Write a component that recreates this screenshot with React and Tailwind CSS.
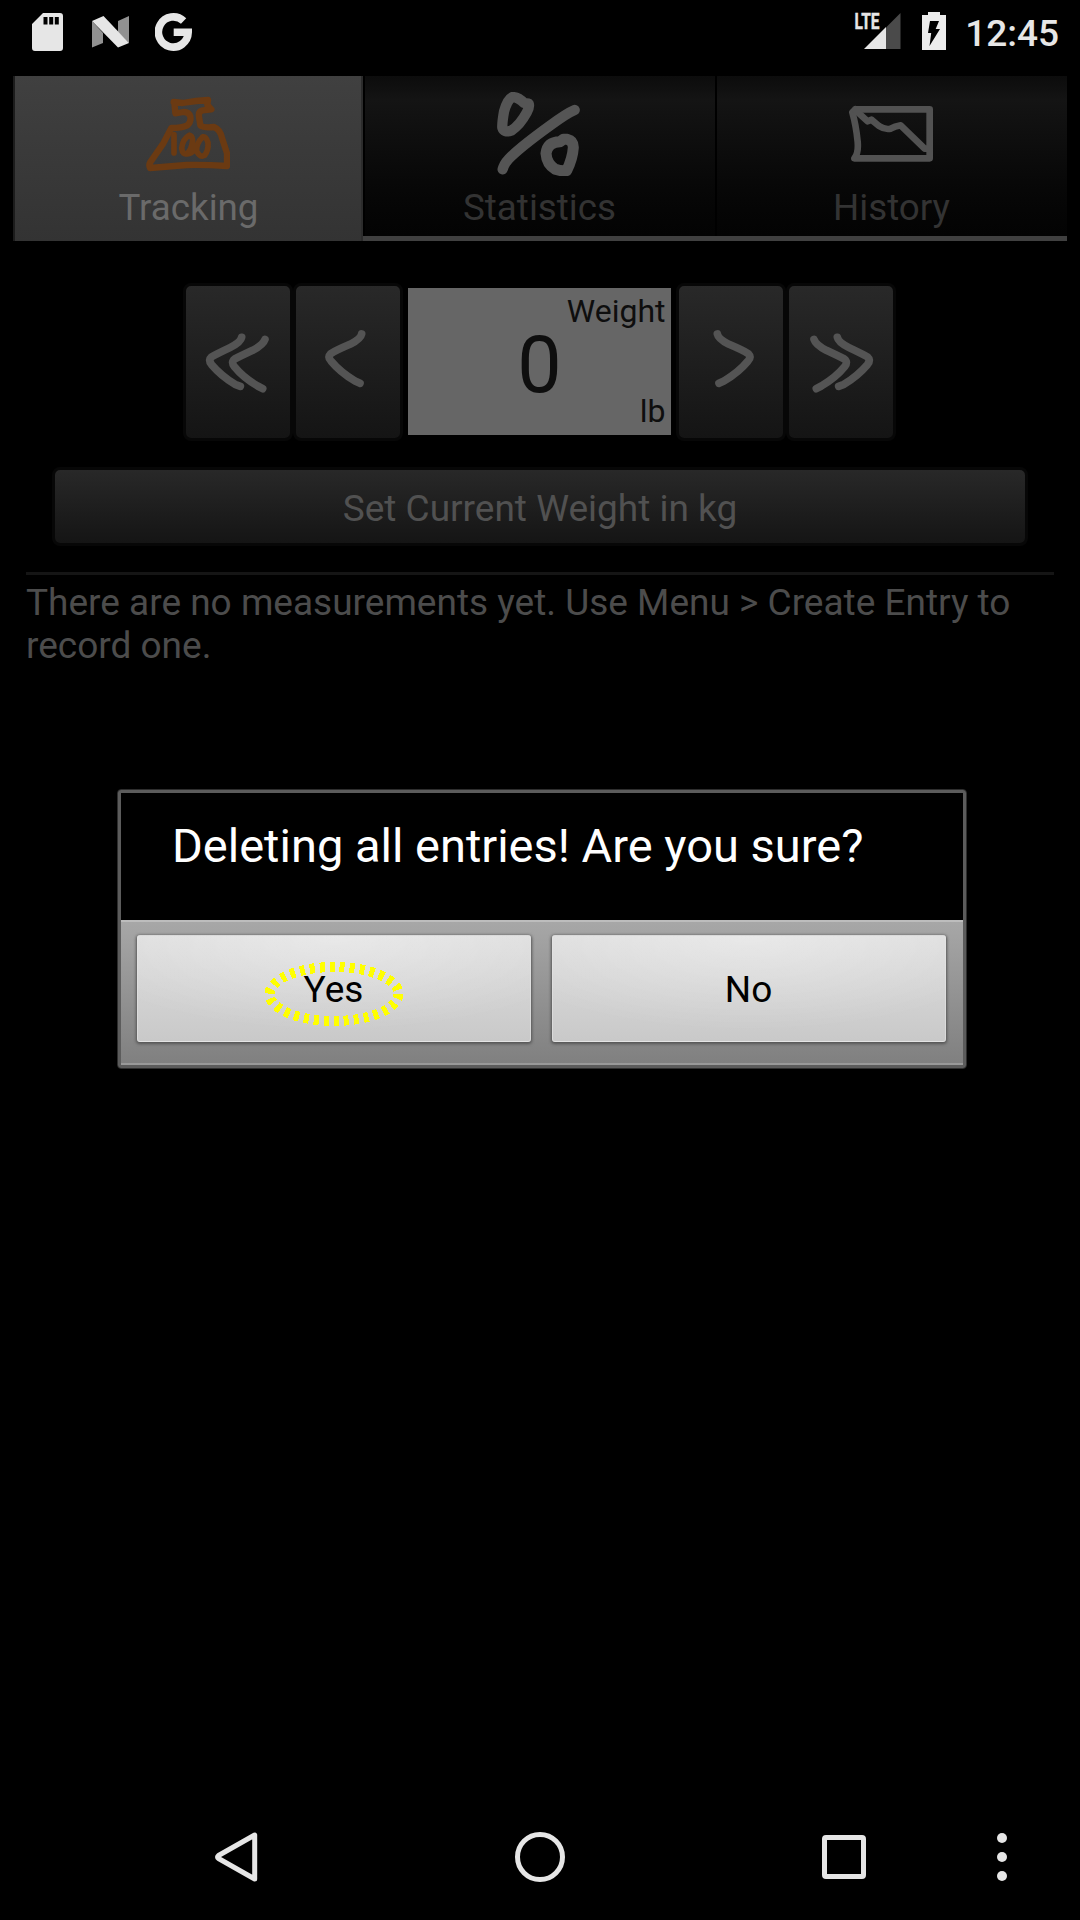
const TABS = [
  { label: "Tracking", icon: <ScaleIcon />, active: true },
  { label: "Statistics", icon: <PercentIcon /> },
  { label: "History", icon: <ChartIcon /> },
];

function ScaleIcon() {
  return (
    <svg className="size-[84px]" viewBox="438 276 252 252" fill="none" stroke="#6b3a12" strokeLinecap="round" strokeLinejoin="round">
      <path strokeWidth="19" d="M521 306 L548 309 Q590 302 624 300 L622 315 L634 328 L608 331 Q594 334 597 350 L601 376 Q610 384 642 381 Q660 388 666 414 L681 460 L681 498 Q620 494 560 495 L450 504 Q446 495 450 488 L490 430 L514 384 Q546 384 562 376 Q574 366 571 350 Q567 335 550 336 L526 340 L523 308" />
      <path strokeWidth="17" d="M522 404 L522 459 M568 406 Q548 417 545 445 Q548 466 562 460 Q574 450 578 422 Q577 407 568 406 M608 411 Q588 430 590 454 Q600 474 614 466 Q626 450 624 428 Q618 408 608 411 M562 462 Q575 462 590 442" />
    </svg>
  );
}

function PercentIcon() {
  return (
    <svg className="size-[84px]" viewBox="441 96 252 252" fill="none" stroke="#555" strokeLinecap="round" strokeLinejoin="round">
      <path strokeWidth="31" d="M488 111 Q472 118 462 155 Q456 190 457 203 Q462 219 484 212 Q510 195 530 158 Q540 140 536 131 L522 129 Q506 112 488 111 Z" />
      <path strokeWidth="31" d="M674 150 Q650 160 600 197 Q510 262 476 297 Q462 312 458 328" />
      <path strokeWidth="33" d="M630 245 Q592 246 588 280 Q590 312 616 328 Q634 334 650 332 Q668 295 670 262 Q670 242 652 238 L640 238 L630 245 Z" />
    </svg>
  );
}

function ChartIcon() {
  return (
    <svg className="size-[84px]" viewBox="447 276 252 252" fill="none" stroke="#525252" strokeWidth="20" strokeLinecap="round" strokeLinejoin="round">
      <path d="M466 328 H689 V475 H463 Q476 460 473 425 Q468 375 457 337 L466 328" />
      <path d="M466 330 L503 364 L514 359 L537 378 Q555 390 572 386 Q584 379 602 376 L674 446 H689" />
    </svg>
  );
}

function SingleArrow({ className = "" }) {
  return (
    <svg className={`h-[152px] w-[104px] ${className}`} viewBox="378 48 312 456" fill="none" stroke="#545454" strokeLinecap="round" strokeLinejoin="round" strokeWidth="23">
      <path d="M575 192 Q572 207 540 223 Q500 240 482 251 Q472 261 483 273 Q510 306 555 333 L570 340" />
    </svg>
  );
}

function DoubleArrow({ className = "" }) {
  return (
    <svg className={`h-[152px] w-[104px] ${className}`} viewBox="48 48 312 456" fill="none" stroke="#545454" strokeLinecap="round" strokeLinejoin="round" strokeWidth="23">
      <path d="M215 202 Q212 217 180 233 Q142 251 124 261 Q114 270 125 284 Q152 316 195 343 L211 349" />
      <path d="M285 208 Q280 224 248 241 Q212 258 194 267 Q182 276 193 290 Q220 323 263 348 L278 356" />
    </svg>
  );
}

function StepButton({ children }) {
  return (
    <button className="h-[158px] w-[110px] rounded-[8px] border-3 border-[#070707] bg-linear-to-b from-[#292929] to-[#141414] bg-origin-border">
      {children}
    </button>
  );
}

function Tab({ label, icon, active }) {
  return (
    <div
      className={
        active
          ? "flex h-[165px] w-[350px] flex-col items-center border-x-2 border-l-[#1c1c1c] border-r-[#2c2c2c] bg-linear-to-b from-[#404040] to-[#333] pt-4 text-[#6a6a6a]"
          : "flex h-[160px] w-[352px] flex-col items-center bg-linear-to-b from-[#0c0c0c] via-[#141414] via-15% to-[#030303] pt-4 text-[#333] shadow-[inset_2px_0_0_#000]"
      }
    >
      {icon}
      <span className="mt-[10px] pl-px text-[36.75px] leading-[43px]">{label}</span>
    </div>
  );
}

function StatusBar() {
  return (
    <header className="flex h-[76px] justify-between pt-3 pr-[21px] pl-8">
      <div className="flex h-[39px] items-center">
        <svg className="h-[38px] w-[31px]" viewBox="0 0 31 38">
          <path fill="#e6e6e6" fillRule="evenodd" d="M11 0 H28 Q31 0 31 3 V35 Q31 38 28 38 H3 Q0 38 0 35 V11 Z M11.5 4 V11.5 H15.5 V4 Z M17.2 4 V11.5 H21.2 V4 Z M22.8 4 V11.5 H26.8 V4 Z" />
        </svg>
        <svg className="ml-[29px] h-[32px] w-[37px]" viewBox="0 0 37 32">
          <path fill="#919191" d="M0 5 L11 17 V27 L0 31.5 Z M26 5 L37 0 V27 L26 16 Z" />
          <path fill="#e6e6e6" d="M0 5 L11.5 0 L37 27 L26 31.5 Z" />
        </svg>
        <svg className="ml-[26px] h-[38px] w-[37px]" viewBox="0 0 37 38" fill="none" stroke="#e6e6e6" strokeWidth="7.6">
          <path d="M28.6 8.1 A14.9 15.1 0 1 0 33.2 19.3 H18.7" />
        </svg>
      </div>
      <div className="flex h-[39px] items-start">
        <svg className="-mt-2 h-[46px] w-[50px]" viewBox="-4 -8 50 46">
          <text x="-0.5" y="17.2" fill="#e6e6e6" stroke="#e6e6e6" strokeWidth="0.4" fontFamily="Roboto" fontWeight="700" fontSize="22" textLength="25" lengthAdjust="spacingAndGlyphs">LTE</text>
          <path fill="#4a4a4a" d="M31 15.5 L45.5 1 V37 H31 Z" />
          <path fill="#e6e6e6" d="M9 37 L31 15 V37 Z" />
        </svg>
        <svg className="ml-[21px] h-[38px] w-6" viewBox="0 0 24 38">
          <path fill="#ececec" d="M6 0 H18 V3 H24 V38 H0 V3 H6 Z" />
          <path fill="#000" d="M8 9 H17 L13.7 17 H18 L7.5 34 L9.2 21 H6 Z" />
        </svg>
        <span className="ml-[19px] text-[37px] leading-[43px] font-medium text-[#e6e6e6]">12:45</span>
      </div>
    </header>
  );
}

function NavBar() {
  return (
    <nav className="mt-auto flex h-[126px] items-center">
      <svg className="ml-[213px] h-[52px] w-[46px]" viewBox="0 0 46 52" fill="none" stroke="#e6e6e6" strokeWidth="5" strokeLinejoin="round">
        <path d="M41.7 4 V48 L5.5 27.5 Q3.5 26 5.5 24.5 Z" />
      </svg>
      <div className="ml-[256px] size-[50px] rounded-full border-[5px] border-[#e6e6e6]" />
      <div className="ml-[257px] size-[44px] rounded-[4px] border-[5px] border-[#e6e6e6]" />
      <div className="ml-[131px] flex flex-col gap-[9px]">
        <i className="size-[10px] rounded-full bg-[#e6e6e6]" />
        <i className="size-[10px] rounded-full bg-[#e6e6e6]" />
        <i className="size-[10px] rounded-full bg-[#e6e6e6]" />
      </div>
    </nav>
  );
}

function DialogButton({ children }) {
  return (
    <button className="h-[107px] w-[394px] rounded-[3px] border border-[#e4e4e4]/60 bg-[radial-gradient(ellipse_70%_90%_at_50%_0%,#ffffff55,#ffffff00),linear-gradient(to_bottom,#dedede,#c9c9c9)] pt-px pr-px text-[37px] leading-[43px] text-black shadow-[0_1px_3px_1px_#555]">
      {children}
    </button>
  );
}

function ConfirmDialog() {
  return (
    <div className="absolute top-[789px] left-[117px] h-[280px] w-[850px] rounded-[4px] border border-[#2e2e2e] bg-black">
      <div className="h-[278px] w-[848px] rounded-[3px] border-3 border-[#5c5c5c]">
        <h1 className="h-[127px] pt-[25px] pl-[51px] text-[47px] leading-[55px] text-white">Deleting all entries! Are you sure?</h1>
        <div className="flex h-[145px] gap-[21px] border-t-2 border-b-2 border-t-[#bdbdbd] border-b-[#999] bg-linear-to-b from-[#a7a7a7] to-[#808080] pt-[13px] pl-[16px]">
          <DialogButton>Yes</DialogButton>
          <DialogButton>No</DialogButton>
        </div>
      </div>
      <svg className="absolute top-[170px] left-[144px] h-[68px] w-[144px]" viewBox="0 0 144 68">
        <ellipse cx="72" cy="34" rx="64.5" ry="27" fill="none" stroke="#ff0" strokeWidth="10" strokeDasharray="5 5" shapeRendering="crispEdges" />
      </svg>
    </div>
  );
}

export default function App() {
  return (
    <div className="relative flex h-[1920px] w-[1080px] flex-col overflow-hidden bg-black font-['Roboto',sans-serif]">
      <StatusBar />
      <div className="mr-[13px] ml-[13px] flex h-[165px] items-start bg-[linear-gradient(#404040,#404040)] bg-[length:100%_5px] bg-bottom bg-no-repeat">
        {TABS.map((tab) => (
          <Tab key={tab.label} {...tab} />
        ))}
      </div>
      <div className="mt-[42px] flex justify-center pr-[2px]">
        <StepButton><DoubleArrow /></StepButton>
        <StepButton><SingleArrow /></StepButton>
        <div className="mx-[5px] mt-[5px] flex h-[147px] w-[263px] flex-col bg-[#666] px-[5px] text-[#0e0e0e]">
          <span className="mt-[5px] h-[37px] text-right text-[32px] leading-[37px]">Weight</span>
          <span className="-mt-[11px] h-[92px] pl-px text-center text-[79px] leading-[92px]">0</span>
          <span className="-mt-[18px] h-[37px] text-right text-[32px] leading-[37px]">lb</span>
        </div>
        <StepButton><SingleArrow className="-scale-x-100" /></StepButton>
        <StepButton><DoubleArrow className="-scale-x-100" /></StepButton>
      </div>
      <button className="mx-[52px] mt-[26px] h-[79px] rounded-[8px] border-3 border-[#070707] bg-linear-to-b from-[#292929] to-[#141414] bg-origin-border pt-[3px] text-[37px] leading-[43px] text-[#515151]">
        Set Current Weight in kg
      </button>
      <div className="mx-[26px] mt-[26px] border-t-3 border-[#151515] pt-[6px]">
        <p className="text-[37px] leading-[43px] text-[#4c4c4c]">There are no measurements yet. Use Menu &gt; Create Entry to record one.</p>
      </div>
      <NavBar />
      <ConfirmDialog />
    </div>
  );
}
